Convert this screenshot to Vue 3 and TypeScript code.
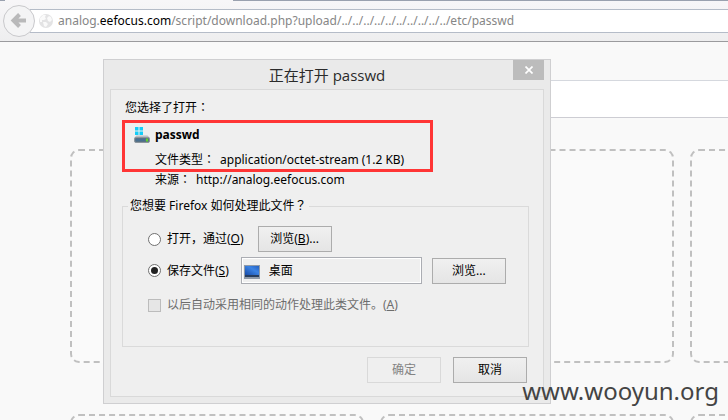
<script setup lang="ts">
import { computed, ref } from 'vue'

const host = 'eefocus.com'
const address = ref('analog.eefocus.com/script/download.php?upload/../../../../../../../../../../etc/passwd')
const addressParts = computed(() => {
  const at = address.value.indexOf(host)
  return at < 0
    ? { before: address.value, host: '', after: '' }
    : { before: address.value.slice(0, at), host, after: address.value.slice(at + host.length) }
})

const action = ref<'open' | 'save'>('save')
const remember = ref(false)
const folder = ref('桌面')
const cards = [1, 2, 3, 4, 5, 6]
</script>

<template>
  <div class="browser">
    <header class="toolbar">
      <span class="tab-edge"></span>
      <button class="back" type="button" aria-label="后退">
        <svg viewBox="0 0 32 32" width="32" height="32">
          <path d="M16.500 9.500 L10.500 15.500 L16.500 21.500 M11 15.500 H23" fill="none" stroke="#b9b9ba" stroke-width="4" />
        </svg>
      </button>
      <div class="address">
        <svg class="globe" viewBox="0 0 14 14" width="14" height="14">
          <circle cx="7" cy="7" r="7" fill="#e3e3e4" />
          <path d="M1 4 L4 1 L7 1 L6 3 L7 5 L5 6 L3 6 L3 8 L1 8Z M8 4 L10 2 L12 3 L13 6 L11 8 L9 7Z M4 8 L7 8 L9 10 L7 13 L5 12Z" fill="#fafafa" />
        </svg>
        <div class="url">
          <div class="url-text" aria-hidden="true">{{ addressParts.before }}<b>{{ addressParts.host }}</b>{{ addressParts.after }}</div>
          <input v-model="address" class="url-input" type="text" aria-label="网址" spellcheck="false" />
        </div>
      </div>
    </header>

    <main class="page">
      <div class="band"></div>
      <div class="cards">
        <div v-for="card in cards" :key="card" class="card"></div>
      </div>
    </main>

    <section class="dialog" role="dialog" aria-labelledby="dialog-title">
      <header class="titlebar">
        <h1 id="dialog-title">正在打开 passwd</h1>
        <button class="close" type="button" aria-label="关闭">
          <svg viewBox="0 0 8 8" width="8" height="8">
            <path d="M0.500 0.500 L7.500 7.500 M7.500 0.500 L0.500 7.500" stroke="#fff" stroke-width="1.700" />
          </svg>
        </button>
      </header>
      <form class="body" @submit.prevent>
        <p class="intro">您选择了打开<span class="mark">：</span></p>
        <div class="file">
          <svg class="drive" viewBox="0 0 16 16" width="16" height="16">
            <path d="M1 0H4.500V3.500H1Z M5.500 0H9V3.500H5.500Z M1 4.500H4.500V8H1Z M5.500 4.500H9V8H5.500Z" fill="#14cdf8" />
            <path d="M2.500 8.500 H13.500 L16 11 H0Z" fill="#b9bec2" />
            <rect x="0.500" y="10.500" width="15" height="5" rx="1.500" fill="#587286" stroke="#8d969d" />
            <rect x="2" y="12" width="9" height="2" fill="#496f8f" />
            <rect x="12" y="11.500" width="2" height="3" fill="#63d42b" />
          </svg>
          <strong>passwd</strong>
          <p class="meta"><span>文件类型<span class="mark">：</span></span><span>application/octet-stream (1.2 KB)</span></p>
          <p class="meta source"><span>来源<span class="mark">：</span></span><span>http://analog.eefocus.com</span></p>
        </div>

        <fieldset class="group">
          <legend>您想要 Firefox 如何处理此文件<span class="mark">？</span></legend>
          <div class="row open-row">
            <input id="open" v-model="action" type="radio" name="action" value="open" />
            <label for="open">打开，通过(<u>O</u>)</label>
            <button class="button" type="button">浏览(<u>B</u>)...</button>
          </div>
          <div class="row save-row">
            <input id="save" v-model="action" type="radio" name="action" value="save" />
            <label for="save">保存文件(<u>S</u>)</label>
            <div class="folder">
              <svg viewBox="0 0 16 14" width="16" height="14">
                <defs>
                  <linearGradient id="screen" x1="0" y1="1" x2="1" y2="0">
                    <stop offset="0" stop-color="#174ba8" />
                    <stop offset="0.600" stop-color="#3b83e4" />
                    <stop offset="1" stop-color="#2460c0" />
                  </linearGradient>
                </defs>
                <rect width="16" height="14" fill="#8f9aa8" />
                <rect x="1" y="1" width="14" height="9" fill="url(#screen)" />
                <rect x="1" y="10" width="14" height="2" fill="#273d5e" />
              </svg>
              <input v-model="folder" type="text" aria-label="保存位置" readonly />
            </div>
            <button class="button" type="button">浏览...</button>
          </div>
          <div class="row remember-row">
            <input id="remember" v-model="remember" type="checkbox" disabled />
            <label for="remember">以后自动采用相同的动作处理此类文件。(<u>A</u>)</label>
          </div>
        </fieldset>

        <footer class="actions">
          <button class="button" type="submit" disabled>确定</button>
          <button class="button" type="button">取消</button>
        </footer>
      </form>
      <span class="highlight"></span>
    </section>

    <div class="watermark">www.wooyun.org</div>
  </div>
</template>

<style>
body {
  background: #f9f9f9;
}
</style>

<style scoped>
.browser {
  position: relative;
  height: 100vh;
  overflow: hidden;
  font: 12px/16px "Noto Sans", "Noto Sans CJK SC", sans-serif;
  color: #000;
}
.browser * {
  box-sizing: border-box;
}
button,
input {
  font: inherit;
  color: inherit;
}
p,
h1 {
  margin: 0;
}
/* Full-width punctuation centred in its cell */
.mark {
  font-family: "Noto Sans CJK TC", sans-serif;
  line-height: 1px;
}

.toolbar {
  position: relative;
  display: flex;
  align-items: center;
  height: 42px;
  padding-left: 3px;
  border-top: 1px solid #9aa1af;
  border-bottom: 1px solid #9b9b9e;
  background: linear-gradient(#f7f6f8, #eeeeef);
}
.tab-edge {
  position: absolute;
  top: -1px;
  left: 5px;
  width: 228px;
  height: 1px;
  background: #f7f6f8;
}
.back {
  z-index: 1;
  flex: none;
  width: 32px;
  height: 32px;
  padding: 0;
  border: 1px solid #c9c9cc;
  border-radius: 50%;
  background: #f4f4f5;
}
.back svg {
  display: block;
  margin: -1px;
}
.address {
  display: flex;
  flex: 1;
  align-items: center;
  gap: 5px;
  height: 24px;
  margin-left: -5px;
  padding-left: 9px;
  border: 1px solid #b5bcc8;
  border-right: 0;
  border-left: 0;
  background: #fff;
}
.globe {
  flex: none;
}
.url {
  display: grid;
  flex: 1;
  min-width: 0;
}
.url-text,
.url-input {
  grid-area: 1 / 1;
  min-width: 0;
  overflow: hidden;
  white-space: pre;
}
.url-text {
  color: #868686;
}
.url-text b {
  font-weight: 400;
  color: #000;
}
.url-input {
  height: 16px;
  padding: 0;
  border: 0;
  outline: 0;
  background: none;
  color: transparent;
  caret-color: #000;
}

.page {
  padding-top: 38px;
}
.band {
  height: 38px;
  margin-left: 110px;
  border-top: 1px solid #d5d8de;
  border-bottom: 1px solid #cdcdd3;
  background: #fff;
}
.cards {
  display: grid;
  grid-template-columns: repeat(3, 294px);
  gap: 51px 16px;
  margin-top: 31px;
  padding-left: 70px;
}
.card {
  height: 214px;
  border: 2px dashed #c0c0c0;
  border-radius: 9px;
  background: #fafafa;
}

.dialog {
  position: absolute;
  top: 59px;
  left: 103px;
  width: 448px;
  padding: 0 6px 6px;
  border: 1px solid #cfcfd1;
  background: #eaeaea;
}
.titlebar {
  display: grid;
  grid-template-columns: 31px 1fr 31px;
  height: 29px;
}
.titlebar h1 {
  grid-column: 2;
  font-family: "Open Sans", "Noto Sans CJK SC", sans-serif;
  font-size: 15px;
  font-weight: 400;
  line-height: 30px;
  text-align: center;
  color: #2b2b2b;
}
.close {
  display: grid;
  place-items: center;
  height: 20px;
  padding: 0;
  border: 0;
  background: #bcbcbc;
}
.body {
  padding: 10px 14px 13px 11px;
  border: 1px solid #d9d9d9;
  background: #efefef;
}
.intro {
  padding-left: 3px;
}
.file {
  display: grid;
  grid-template-columns: 16px 1fr;
  column-gap: 5px;
  align-items: center;
  padding: 11px 0 0 12px;
}
.file strong {
  font-family: "Open Sans", sans-serif;
  font-weight: 700;
}
.meta {
  display: flex;
  grid-column: 2;
  gap: 5px;
  margin-top: 9px;
}
.source {
  margin-top: 4px;
}

.group {
  margin: 10px 0 0;
  padding: 12px 10px 33px 25px;
  border: 1px solid #dadada;
}
.group legend {
  margin-left: -20px;
  padding: 0 2px;
}
.row {
  display: flex;
  align-items: center;
}
.row label {
  margin-left: 6px;
}
.row .button {
  width: 74px;
}
.open-row .button {
  margin-left: 14px;
}
.save-row {
  margin-top: 5px;
}
.save-row .button {
  margin-left: 10px;
}
.remember-row {
  margin-top: 13px;
  color: #6d6d6d;
}
input[type="radio"],
input[type="checkbox"] {
  display: grid;
  flex: none;
  place-items: center;
  width: 13px;
  height: 13px;
  margin: 0;
  border: 1px solid #707070;
  background: #fff;
  appearance: none;
}
input[type="radio"] {
  border-radius: 50%;
}
input[type="radio"]:checked::before {
  width: 7px;
  height: 7px;
  border-radius: 50%;
  background: #222;
  content: "";
}
input[type="checkbox"]:disabled {
  border-color: #bcbcbc;
  background: #e6e6e6;
}
.folder {
  display: flex;
  flex: none;
  align-items: center;
  gap: 9px;
  width: 181px;
  height: 27px;
  margin-left: 12px;
  padding-left: 2px;
  border: 1px solid #abadb3;
  outline: 1px solid #fff;
  outline-offset: -2px;
}
.folder svg {
  flex: none;
  margin-top: 2px;
}
.folder input {
  width: 100%;
  min-width: 0;
  padding: 0;
  border: 0;
  outline: 0;
  background: none;
}
.button {
  height: 26px;
  padding: 0;
  border: 1px solid #acacac;
  background: linear-gradient(#f0f0f0, #e5e5e5);
}
.button:disabled {
  border-color: #d9d9d9;
  background: #efefef;
  color: #838383;
}
.actions {
  display: flex;
  gap: 12px;
  justify-content: flex-end;
  padding: 10px 2px 0 0;
}
.actions .button {
  width: 74px;
}

.highlight {
  position: absolute;
  top: 60px;
  left: 18px;
  width: 311px;
  height: 52px;
  border: 3px solid #ff3535;
  pointer-events: none;
}
.watermark {
  position: absolute;
  right: 9px;
  bottom: 12px;
  font-size: 24px;
  line-height: 34px;
  color: #444;
}
</style>
